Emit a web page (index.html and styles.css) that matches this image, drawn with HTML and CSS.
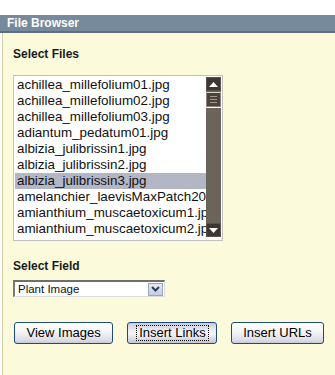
FILE: index.html
```html
<!DOCTYPE html>
<html>
<head>
<meta charset="utf-8">
<title>File Browser</title>
<link rel="stylesheet" href="styles.css">
</head>
<body>
<div class="header">File Browser</div>
<div class="panel">
  <h2 class="label">Select Files</h2>
  <div class="listbox">
    <ul class="items">
      <li>achillea_millefolium01.jpg</li>
      <li>achillea_millefolium02.jpg</li>
      <li>achillea_millefolium03.jpg</li>
      <li>adiantum_pedatum01.jpg</li>
      <li>albizia_julibrissin1.jpg</li>
      <li>albizia_julibrissin2.jpg</li>
      <li class="selected">albizia_julibrissin3.jpg</li>
      <li>amelanchier_laevisMaxPatch2001.jpg</li>
      <li>amianthium_muscaetoxicum1.jpg</li>
      <li>amianthium_muscaetoxicum2.jpg</li>
    </ul>
    <div class="scrollbar">
      <div class="sb-btn"><svg width="11" height="7" viewBox="0 0 11 7"><path d="M1 6 L5.5 1 L10 6 Z" fill="#fff"/></svg></div>
      <div class="sb-thumb"><span></span><span></span><span></span></div>
      <div class="sb-track"></div>
      <div class="sb-btn"><svg width="11" height="7" viewBox="0 0 11 7"><path d="M1 1 L5.5 6 L10 1 Z" fill="#fff"/></svg></div>
    </div>
  </div>
  <h2 class="label field-label">Select Field</h2>
  <div class="select">
    <span class="select-value">Plant Image</span>
    <span class="select-btn"><svg width="9" height="6" viewBox="0 0 9 6"><path d="M1 1 L4.5 4.5 L8 1" fill="none" stroke="#2c3d5e" stroke-width="2"/></svg></span>
  </div>
  <div class="buttons">
    <button class="btn">View Images</button>
    <button class="btn btn-focus"><span>Insert Links</span></button>
    <button class="btn">Insert URLs</button>
  </div>
</div>
</body>
</html>
```
FILE: styles.css
```css
html, body {
  margin: 0;
  padding: 0;
  background: #fff;
  font-family: "Liberation Sans", Arial, sans-serif;
}

.header {
  margin-top: 15px;
  height: 16px;
  line-height: 16px;
  padding-left: 7px;
  background: #778a9b;
  border-bottom: 2px solid #5e7080;
  color: #fff;
  font-weight: bold;
  font-size: 12px;
}

.panel {
  margin-left: 2px;
  border-left: 1px solid #d3cfa5;
  background: #fbfadb;
  min-height: 342px;
  padding: 14px 0 0 10px;
  box-sizing: border-box;
}

.label {
  margin: 0;
  font-size: 12px;
  line-height: 15px;
  font-weight: bold;
  color: #1a1a1a;
}

.listbox {
  margin-top: 13px;
  width: 207px;
  height: 162px;
  border: 1px solid #c2c2c2;
  padding: 1px 0 1px 1px;
  background: #fff;
  display: flex;
  box-sizing: content-box;
}

.items {
  list-style: none;
  margin: 0;
  padding: 0;
  flex: 1;
  overflow: hidden;
  height: 160px;
}

.items li {
  height: 16px;
  line-height: 16px;
  padding-left: 2px;
  font-size: 13.4px;
  color: #111;
  white-space: nowrap;
}

.items li.selected {
  background: #b3b6c5;
}

.scrollbar {
  width: 15px;
  height: 160px;
  display: flex;
  flex-direction: column;
  background: #6b645b;
  margin-right: 1px;
}

.sb-btn {
  height: 14px;
  background: #3c3730;
  border: 1px solid #5a534a;
  box-sizing: border-box;
  display: flex;
  align-items: center;
  justify-content: center;
}

.sb-thumb {
  margin-top: 1px;
  height: 15px;
  background: #4a443c;
  border: 1px solid #8c8478;
  box-sizing: border-box;
  display: flex;
  flex-direction: column;
  justify-content: center;
  align-items: center;
  gap: 2px;
  border-top-color: #d8d4cc;
}

.sb-thumb span {
  display: block;
  width: 7px;
  height: 1px;
  background: #a49a8c;
}

.sb-track {
  flex: 1;
  border-top: 1px solid #ffffff;
}

.field-label {
  margin-top: 18px;
}

.select {
  margin-top: 6px;
  width: 152px;
  height: 17px;
  box-sizing: border-box;
  background: #fff;
  border-top: 2px solid #6e6e6e;
  border-left: 2px solid #7a7a7a;
  border-right: 1px solid #dcdcdc;
  border-bottom: 1px solid #dcdcdc;
  display: flex;
  align-items: center;
  justify-content: space-between;
}

.select-value {
  padding-left: 3px;
  font-size: 11.5px;
  color: #111;
  line-height: 14px;
}

.select-btn {
  width: 15px;
  height: 13px;
  margin-right: 1px;
  box-sizing: border-box;
  background: linear-gradient(#e6eaf4, #c4cde0);
  border: 1px solid #9ba6bd;
  display: flex;
  align-items: center;
  justify-content: center;
}

.buttons {
  margin-top: 25px;
  margin-left: 1px;
  display: flex;
  gap: 14px;
}

.btn {
  height: 22px;
  padding: 0 11.5px;
  margin: 0;
  font-family: "Liberation Sans", Arial, sans-serif;
  font-size: 13px;
  color: #000;
  border: 1px solid #1f4a7a;
  border-radius: 3px;
  background: linear-gradient(#ffffff 0%, #f4f4f6 45%, #dcdde6 85%, #c9cad8 100%);
  line-height: 18px;
}

.btn-focus {
  padding: 0 7px 0 8px;
  background: linear-gradient(#c9cbd9 0%, #eeeef3 40%, #f3f3f6 55%, #c4c5d3 100%);
}

.btn-focus span {
  display: block;
  padding: 0 2px;
  border: 1px dotted #000;
  line-height: 14px;
}
```
